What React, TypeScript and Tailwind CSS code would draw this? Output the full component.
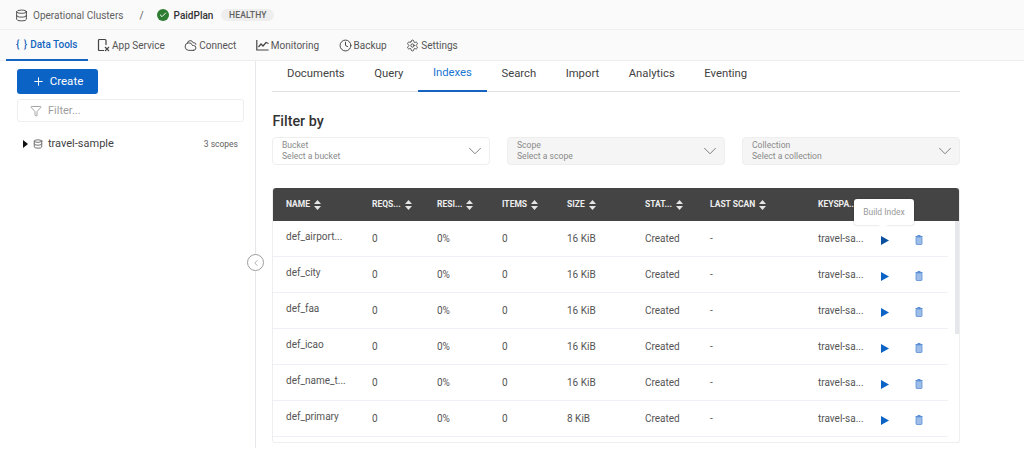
import { Database, Filter, Plus, ChevronDown, ChevronLeft, Clock, Settings, Cloudy, Check } from "lucide-react"

const columns = [
  { label: "NAME", width: "w-[86px]" },
  { label: "REQS...", width: "w-[65px]" },
  { label: "RESI...", width: "w-[65px]" },
  { label: "ITEMS", width: "w-[65px]" },
  { label: "SIZE", width: "w-[78px]" },
  { label: "STAT...", width: "w-[65px]" },
  { label: "LAST SCAN", width: "w-[108px]" },
]

const rows = [
  { name: "def_airport...", size: "16 KiB" },
  { name: "def_city", size: "16 KiB" },
  { name: "def_faa", size: "16 KiB" },
  { name: "def_icao", size: "16 KiB" },
  { name: "def_name_t...", size: "16 KiB" },
  { name: "def_primary", size: "8 KiB" },
]

function AppServiceIcon() {
  return (
    <svg width="13" height="14" viewBox="0 0 13 14" fill="none" stroke="#444" strokeWidth="1.2">
      <path d="M7 12.5 H2.5 Q1.5 12.5 1.5 11.5 V2.5 Q1.5 1.5 2.5 1.5 H8 Q9 1.5 9 2.5 V7" />
      <path d="M8 9 L12 13 M12 9 L8 13" strokeWidth="1.1" />
    </svg>
  )
}

function MonitoringIcon() {
  return (
    <svg width="13" height="14" viewBox="0 0 13 14" fill="none" stroke="#444" strokeWidth="1.2">
      <path d="M0.8 2 V12 H12.6" />
      <path d="M2.5 9 L5 6 L7 8 L10 4.5 L12.5 5.5" />
    </svg>
  )
}

const navItems = [
  { label: "App Service", icon: <AppServiceIcon /> },
  { label: "Connect", icon: <Cloudy size={13} strokeWidth={1.7} color="#444" /> },
  { label: "Monitoring", icon: <MonitoringIcon /> },
  { label: "Backup", icon: <Clock size={13} strokeWidth={1.8} color="#444" /> },
  { label: "Settings", icon: <Settings size={13} strokeWidth={1.7} color="#444" /> },
]

const subTabs = ["Documents", "Query", "Indexes", "Search", "Import", "Analytics", "Eventing"]

function SortIcon() {
  return (
    <svg width="7" height="10" viewBox="0 0 7 10" className="ml-[4px] shrink-0" fill="#e5e5e5">
      <path d="M3.5 0 L7 4 H0 Z" />
      <path d="M3.5 10 L7 6 H0 Z" />
    </svg>
  )
}

function TrashIcon() {
  return (
    <svg width="8" height="11" viewBox="0 0 8 11">
      <path d="M2.5 1 H5.5 V2 H7.5 V3 H0.5 V2 H2.5 Z" fill="#5b8fd6" />
      <rect x="1" y="3" width="6" height="7.5" rx="0.8" fill="#9dbde9" stroke="#5b8fd6" strokeWidth="0.8" />
    </svg>
  )
}

function SelectBox({ label, placeholder, disabled, width }: { label: string; placeholder: string; disabled?: boolean; width: string }) {
  return (
    <div className={`${width} h-[28px] flex items-center justify-between rounded-[4px] border border-[#eeeeee] pl-[9px] pr-[3px] ${disabled ? "bg-[#f5f5f5]" : "bg-white"}`}>
      <div className="flex flex-col text-[8.6px] leading-[11px] text-[#8a8a8a]">
        <span>{label}</span>
        <span>{placeholder}</span>
      </div>
      <ChevronDown size={22} strokeWidth={0.9} className="text-[#666]" />
    </div>
  )
}

export default function App() {
  return (
    <div className="w-[1024px] h-[466px] bg-white overflow-hidden text-[#424242] font-['Roboto',sans-serif]">
      {/* breadcrumb */}
      <div className="h-[30px] bg-[#fafafa] border-b border-[#eeeeee] flex items-center pl-[15px] pt-[1px]">
        <Database size={13} strokeWidth={1.7} className="text-[#444]" />
        <span className="ml-[5px] text-[10px] text-[#616161]">Operational Clusters</span>
        <span className="ml-[16px] text-[10px] text-[#555]">/</span>
        <span className="ml-[13px] w-[12px] h-[12px] rounded-full bg-[#2e7d32] flex items-center justify-center">
          <Check size={8} strokeWidth={3} className="text-white" />
        </span>
        <span className="ml-[5px] text-[10px] font-medium text-[#333]">PaidPlan</span>
        <span className="ml-[8px] h-[12px] w-[53px] rounded-full bg-[#eeeeee] flex items-center justify-center text-[8.5px] font-medium tracking-[0.2px] text-[#616161]">HEALTHY</span>
      </div>

      {/* main nav */}
      <div className="h-[31px] bg-[#fafafa] border-b border-[#eeeeee] flex items-stretch pl-[6px]">
        <div className="w-[82px] h-[31px] flex items-center gap-[2px] pl-[10px] text-[#1565c0] text-[10px] font-medium border-b-2 border-[#1565c0]">
          <span className="tracking-[1px]">{"{ }"}</span>
          <span>Data Tools</span>
        </div>
        <div className="flex items-center gap-[19.5px] pl-[9px] text-[10px] text-[#555]">
          {navItems.map((item) => (
            <div key={item.label} className="flex items-center gap-[2px]">
              {item.icon}
              <span>{item.label}</span>
            </div>
          ))}
        </div>
      </div>

      <div className="flex h-[387px]">
        {/* sidebar */}
        <div className="relative w-[256px] shrink-0 border-r border-[#e5e7eb] pl-[17px] pr-[11px] pt-[8px]">
          <div className="w-[81px] h-[25px] rounded-[3px] bg-[#0b63c5] flex items-center justify-center gap-[5px] text-white text-[11.5px]">
            <Plus size={13} strokeWidth={1.8} />
            <span>Create</span>
          </div>
          <div className="mt-[5px] h-[23px] rounded-[3px] border border-[#eeeeee] flex items-center pl-[12px] gap-[6px] pt-[1px] text-[11px] text-[#9e9e9e]">
            <Filter size={12} strokeWidth={1.3} className="text-[#757575]" />
            <span>Filter...</span>
          </div>
          <div className="mt-[14px] flex items-center pl-[6px] pr-[6px]">
            <svg width="5" height="8" viewBox="0 0 5 8" fill="#111"><path d="M0 0 L5 4 L0 8 Z" /></svg>
            <Database size={10} strokeWidth={2} className="ml-[5px] text-[#555]" />
            <span className="ml-[5px] text-[11px] text-[#424242]">travel-sample</span>
            <span className="ml-auto text-[8.5px] text-[#616161]">3 scopes</span>
          </div>
          <div className="absolute right-[-9px] top-[193px] w-[17px] h-[17px] rounded-full border border-[#9e9e9e] bg-white flex items-center justify-center">
            <ChevronLeft size={10} strokeWidth={1.2} className="text-[#666]" />
          </div>
        </div>

        {/* content */}
        <div className="pl-[16px] w-[704px]">
          <div className="h-[31px] flex border-b border-[#e0e0e0] pl-[0.25px] text-[11.3px]">
            {subTabs.map((tab) => (
              <div
                key={tab}
                className={
                  tab === "Indexes"
                    ? "h-[31px] px-[14.75px] pb-[4px] flex items-center border-b-2 border-[#1565c0] text-[#1976d2]"
                    : "h-[31px] px-[14.75px] pb-[4px] flex items-center text-[#424242]"
                }
              >
                {tab}
              </div>
            ))}
          </div>

          <div className="mt-[20px] pl-[0.5px] text-[14.3px] leading-[18px] font-medium text-[#333]">Filter by</div>

          <div className="mt-[7px] flex gap-[17px]">
            <SelectBox width="w-[218px]" label="Bucket" placeholder="Select a bucket" />
            <SelectBox width="w-[218px]" label="Scope" placeholder="Select a scope" disabled />
            <SelectBox width="w-[218px]" label="Collection" placeholder="Select a collection" disabled />
          </div>

          {/* table */}
          <div className="relative mt-[23px] w-[688px] h-[255px] rounded-[3px] border-b border-x border-[#eeeeee]">
            <div className="h-[33px] bg-[#444444] rounded-t-[3px] flex items-center pl-[13px] text-[8.5px] font-bold text-[#eeeeee]">
              {columns.map((col) => (
                <div key={col.label} className={`${col.width} flex items-center`}>
                  <span>{col.label}</span>
                  <SortIcon />
                </div>
              ))}
              <span>KEYSPA...</span>
            </div>

            {rows.map((row, i) => (
              <div key={row.name} className="mr-[11px] h-[36px] border-b border-[#eef0f5] flex pl-[13px] text-[10px] text-[#555]">
                <div className="w-[86px] pt-[8px]">{row.name}</div>
                <div className="w-[65px] pt-[10px]">0</div>
                <div className="w-[65px] pt-[10px]">0%</div>
                <div className="w-[65px] pt-[10px]">0</div>
                <div className="w-[78px] pt-[10px]">{row.size}</div>
                <div className="w-[65px] pt-[10px]">Created</div>
                <div className="w-[108px] pt-[10px]">-</div>
                <div className="w-[63px] pt-[10px]">travel-sa...</div>
                <div className="w-[34px] pt-[15px]">
                  <svg width="8" height="9" viewBox="0 0 8 9" fill={i === 0 ? "#0a4f9e" : "#0b63c5"}><path d="M0 0 L8 4.5 L0 9 Z" /></svg>
                </div>
                <div className="pt-[13px]">
                  <TrashIcon />
                </div>
              </div>
            ))}

            <div className="absolute right-0 top-[33px] w-[4px] h-[113px] bg-[#e5e7eb]" />

            {/* tooltip */}
            <div className="absolute left-[581px] top-[11px] w-[60px] h-[26px] rounded-[3px] bg-white shadow-[0_0_2px_rgba(0,0,0,0.25)] flex items-center justify-center text-[8.5px] text-[#9a9a9a]">
              Build Index
              <span className="absolute left-[26px] bottom-[-3px] w-[6px] h-[6px] rotate-45 bg-white" />
            </div>
          </div>
        </div>
      </div>
    </div>
  )
}
